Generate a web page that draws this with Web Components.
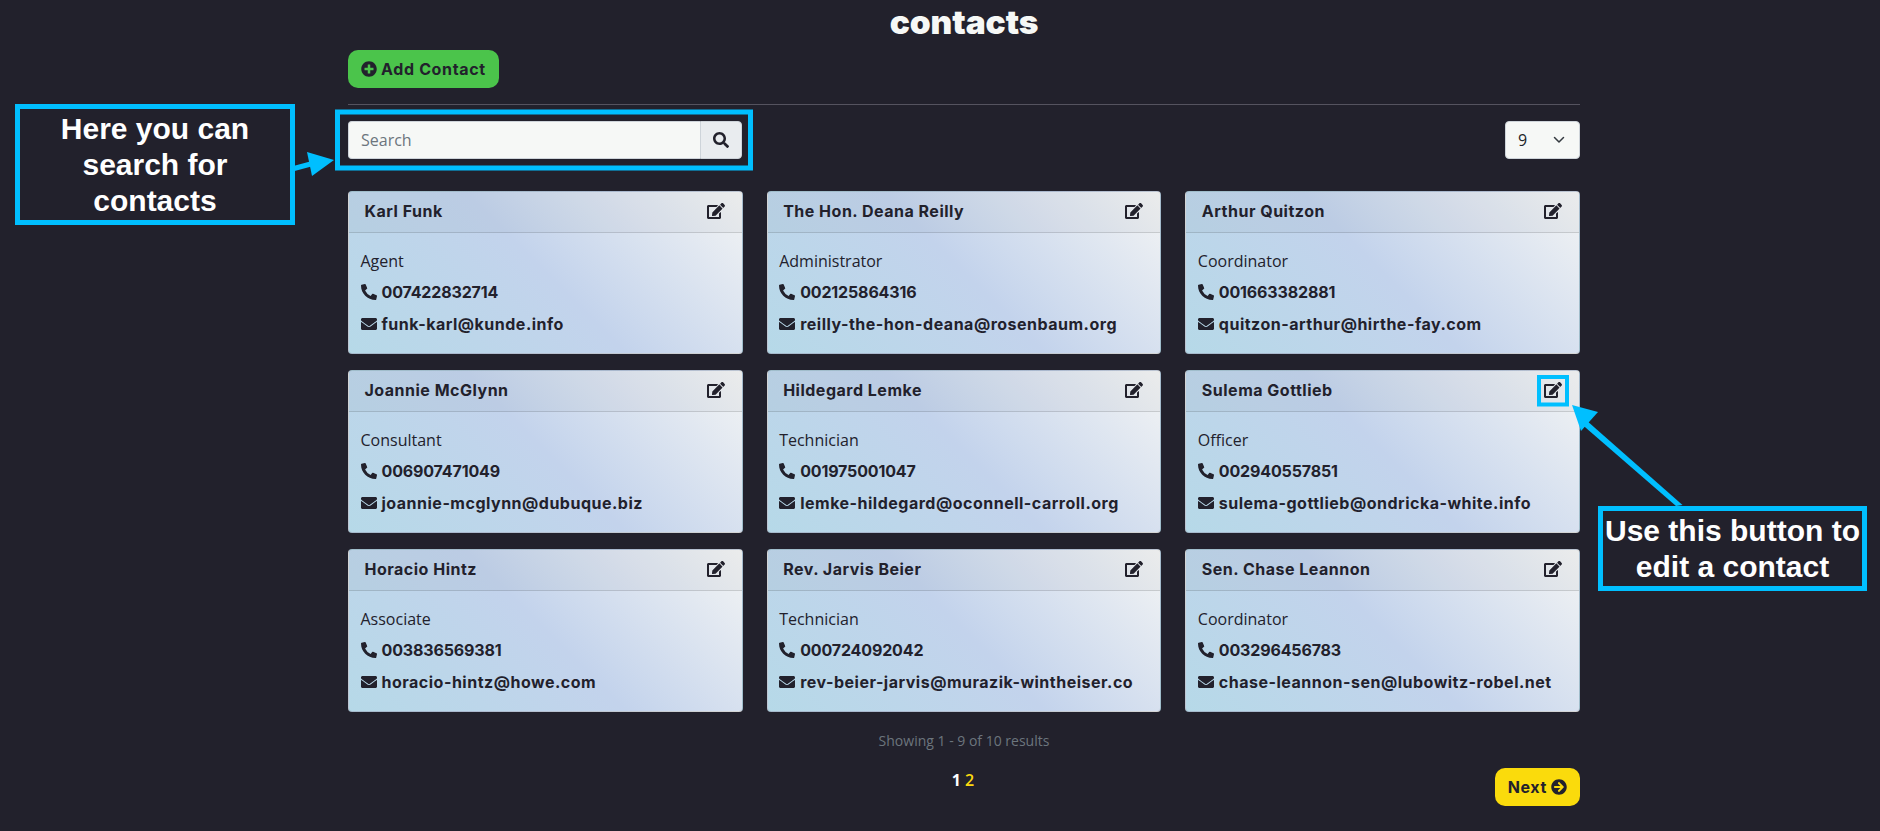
<!DOCTYPE html>
<html lang="en"><head><meta charset="utf-8"><title>contacts</title>
<style>
html,body{margin:0;height:831px;overflow:hidden;background:#22212c}
body{font-family:"Open Sans",sans-serif;color:#22212c}
</style></head><body>
<contacts-app></contacts-app>
<script>
const P={
phone:['0 0 512 512','M497.39 361.8l-112-48a24 24 0 0 0-28 6.9l-49.6 60.6A370.66 370.66 0 0 1 130.6 204.11l60.6-49.6a23.94 23.94 0 0 0 6.9-28l-48-112A24.16 24.16 0 0 0 122.6.61l-104 24A24 24 0 0 0 0 48c0 256.5 207.9 464 464 464a24 24 0 0 0 23.4-18.6l24-104a24.29 24.29 0 0 0-14.01-27.6z'],
mail:['0 0 512 512','M502.3 190.8c3.9-3.1 9.7-.2 9.7 4.7V400c0 26.5-21.5 48-48 48H48c-26.5 0-48-21.5-48-48V195.6c0-5 5.7-7.8 9.7-4.7 22.4 17.4 52.1 39.5 154.1 113.6 21.1 15.4 56.7 47.8 92.2 47.6 35.7.3 72-32.8 92.3-47.6 102-74.1 131.6-96.3 154-113.7zM256 320c23.2.4 56.6-29.2 73.4-41.4 132.7-96.3 142.8-104.7 173.4-128.7 5.8-4.5 9.2-11.5 9.2-18.9v-19c0-26.5-21.5-48-48-48H48C21.5 64 0 85.5 0 112v19c0 7.4 3.4 14.3 9.2 18.9 30.6 23.9 40.7 32.4 173.4 128.7 16.8 12.2 50.2 41.8 73.4 41.4z'],
search:['0 0 512 512','M505 442.7L405.3 343c-4.5-4.5-10.6-7-17-7H372c27.6-35.3 44-79.7 44-128C416 93.1 322.9 0 208 0S0 93.1 0 208s93.1 208 208 208c48.3 0 92.7-16.4 128-44v16.3c0 6.4 2.5 12.5 7 17l99.7 99.7c9.4 9.4 24.6 9.4 33.9 0l28.3-28.3c9.4-9.4 9.4-24.6.1-34zM208 336c-70.7 0-128-57.2-128-128 0-70.7 57.2-128 128-128 70.7 0 128 57.2 128 128 0 70.7-57.2 128-128 128z'],
plus:['0 0 512 512','M256 8C119 8 8 119 8 256s111 248 248 248 248-111 248-248S393 8 256 8zm144 276c0 6.6-5.4 12-12 12h-92v92c0 6.6-5.4 12-12 12h-56c-6.6 0-12-5.4-12-12v-92h-92c-6.6 0-12-5.4-12-12v-56c0-6.6 5.4-12 12-12h92v-92c0-6.6 5.4-12 12-12h56c6.6 0 12 5.4 12 12v92h92c6.6 0 12 5.4 12 12v56z'],
next:['0 0 512 512','M256 8c137 0 248 111 248 248S393 504 256 504 8 393 8 256 119 8 256 8zm-28.9 143.6l75.5 72.4H120c-13.3 0-24 10.7-24 24v16c0 13.3 10.7 24 24 24h182.6l-75.5 72.4c-9.7 9.3-9.9 24.8-.4 34.3l11 10.9c9.4 9.4 24.6 9.4 33.9 0L404.3 273c9.4-9.4 9.4-24.6 0-33.9L271.6 106.3c-9.4-9.4-24.6-9.4-33.9 0l-11 10.9c-9.3 9.6-9.1 25.1.4 34.4z'],
edit:['0 0 576 512','M402.6 83.2l90.2 90.2c3.8 3.8 3.8 10 0 13.8L274.4 405.6l-92.8 10.3c-12.4 1.4-22.9-9.1-21.5-21.5l10.3-92.8L388.8 83.2c3.8-3.8 10-3.8 13.8 0zm162-22.9l-48.8-48.8c-15.2-15.2-39.9-15.2-55.2 0l-35.4 35.4c-3.8 3.8-3.8 10 0 13.8l90.2 90.2c3.8 3.8 10 3.8 13.8 0l35.4-35.4c15.2-15.3 15.2-40 0-55.2zM384 346.2V448H64V128h229.8c3.2 0 6.2-1.3 8.5-3.5l40-40c7.6-7.6 2.2-20.5-8.5-20.5H48C21.5 64 0 85.5 0 112v352c0 26.5 21.5 48 48 48h352c26.5 0 48-21.5 48-48V306.2c0-10.7-12.9-16-20.5-8.5l-40 40c-2.2 2.3-3.5 5.3-3.5 8.5z']
};
const icon=(n,w,h)=>`<svg width="${w}" height="${h||w}" viewBox="${P[n][0]}" fill="currentColor" aria-hidden="true" style="display:block;flex:none"><path d="${P[n][1]}"/></svg>`;
const BOLD='"Inter","Liberation Sans",sans-serif';

class AppButton extends HTMLElement{
  connectedCallback(){
    const c=this.getAttribute('color'),i=this.getAttribute('icon'),after=this.hasAttribute('after');
    this.attachShadow({mode:'open'}).innerHTML=`<style>
    :host{display:inline-flex}
    .b{display:flex;align-items:center;gap:4px;height:38px;box-sizing:border-box;padding:0 13px;border-radius:10px;background:${c};color:#22212c;font:700 16px/1 ${BOLD};letter-spacing:.65px}
    </style><div class="b">${after?'':icon(i,16)}<slot></slot>${after?icon(i,16):''}</div>`;
  }
}
customElements.define('app-button',AppButton);

class SearchBox extends HTMLElement{
  connectedCallback(){
    this.attachShadow({mode:'open'}).innerHTML=`<style>
    :host{display:flex;width:394px;height:38px;box-sizing:border-box}
    .i{flex:1;display:flex;align-items:center;padding:0 12px;background:#f6f8f6;border-radius:4px 0 0 4px;color:#6c757d;font:400 16px "Open Sans",sans-serif;border:1px solid #ced4da;border-right:0}
    .b{width:42px;display:flex;align-items:center;justify-content:center;background:#e9ecef;border:1px solid #ced4da;border-radius:0 4px 4px 0;color:#22212c;box-sizing:border-box}
    </style><div class="i">Search</div><div class="b">${icon('search',16)}</div>`;
  }
}
customElements.define('search-box',SearchBox);

class PageSelect extends HTMLElement{
  connectedCallback(){
    this.attachShadow({mode:'open'}).innerHTML=`<style>
    :host{display:flex;width:75px;height:38px;box-sizing:border-box;align-items:center;justify-content:space-between;padding:0 14px 0 12px;background:#f6f8f6;border-radius:4px;border:1px solid #ced4da;color:#212529;font:400 16px "Open Sans",sans-serif}
    </style><span>9</span><svg width="12" height="9" viewBox="0 0 16 12" fill="none" stroke="#343a40" stroke-width="2" stroke-linecap="round" stroke-linejoin="round"><path d="M2 2l6 6 6-6"/></svg>`;
  }
}
customElements.define('page-select',PageSelect);

class ContactCard extends HTMLElement{
  connectedCallback(){
    const a=k=>this.getAttribute(k);
    this.attachShadow({mode:'open'}).innerHTML=`<style>
    :host{display:block;height:163px;box-sizing:border-box;border-radius:4px;border:1px solid rgba(0,0,0,.125);overflow:hidden;
      background:linear-gradient(45deg,#b6d9e8 0%,#c3d3ec 50%,#f3f4f4 100%);color:#22212c}
    header{display:flex;align-items:center;justify-content:space-between;height:41px;box-sizing:border-box;padding:0 17px 2px 15.5px;background:rgba(0,0,0,.03);border-bottom:1px solid rgba(0,0,0,.125)}
    .n{font:700 16px/1 ${BOLD};letter-spacing:.5px}
    .body{padding:16px 12px 0 11.5px;display:flex;flex-direction:column}
    .role{font:400 16px/24px "Open Sans",sans-serif;height:24px;margin-bottom:7px}
    .row{display:flex;align-items:center;gap:5px;font:700 16px/24px ${BOLD};letter-spacing:.5px;height:24px;margin-bottom:8px}
    .ph{letter-spacing:-.15px}
    </style>
    <header><span class="n">${a('name')}</span>${icon('edit',18,16)}</header>
    <div class="body"><div class="role">${a('role')}</div>
    <div class="row">${icon('phone',16)}<span class="ph">${a('phone')}</span></div>
    <div class="row">${icon('mail',16)}<span>${a('mail')}</span></div></div>`;
  }
}
customElements.define('contact-card',ContactCard);

class PagerBar extends HTMLElement{
  connectedCallback(){
    this.attachShadow({mode:'open'}).innerHTML=`<style>
    :host{display:block;color:#6c757d;font:400 14px/20px "Open Sans",sans-serif;text-align:center}
    .r{margin-top:15px;display:grid;grid-template-columns:1fr auto 1fr;align-items:start;}
    .p{grid-column:2;font:600 16px/22px "Open Sans",sans-serif;color:#fff;display:flex;gap:4px;padding-top:3px;margin-left:-2px}
    .p b{font-weight:700}
    .p span{color:#fbd90f;font-weight:600}
    .n{justify-self:end;margin-top:2px}
    </style><div>Showing 1 - 9 of 10 results</div>
    <div class="r"><div class="p"><b>1</b><span>2</span></div><div class="n"><slot></slot></div></div>`;
  }
}
customElements.define('pager-bar',PagerBar);

class CallOut extends HTMLElement{
  connectedCallback(){
    this.attachShadow({mode:'open'}).innerHTML=`<style>
    :host{position:absolute;box-sizing:border-box;border:5px solid #00bfff;display:flex;align-items:center;justify-content:center;text-align:center;color:#fff;font:700 30px/36px "Liberation Sans",Arial,sans-serif}
    </style><slot></slot>`;
  }
}
customElements.define('call-out',CallOut);

const DATA=[
['Karl Funk','Agent','007422832714','funk-karl@kunde.info'],
['The Hon. Deana Reilly','Administrator','002125864316','reilly-the-hon-deana@rosenbaum.org'],
['Arthur Quitzon','Coordinator','001663382881','quitzon-arthur@hirthe-fay.com'],
['Joannie McGlynn','Consultant','006907471049','joannie-mcglynn@dubuque.biz'],
['Hildegard Lemke','Technician','001975001047','lemke-hildegard@oconnell-carroll.org'],
['Sulema Gottlieb','Officer','002940557851','sulema-gottlieb@ondricka-white.info'],
['Horacio Hintz','Associate','003836569381','horacio-hintz@howe.com'],
['Rev. Jarvis Beier','Technician','000724092042','rev-beier-jarvis@murazik-wintheiser.co'],
['Sen. Chase Leannon','Coordinator','003296456783','chase-leannon-sen@lubowitz-robel.net']];

class ContactsApp extends HTMLElement{
  connectedCallback(){
    const cards=DATA.map(d=>`<contact-card name="${d[0]}" role="${d[1]}" phone="${d[2]}" mail="${d[3]}"></contact-card>`).join('');
    this.attachShadow({mode:'open'}).innerHTML=`<style>
    :host{display:block;position:relative;width:1880px;height:831px;box-sizing:border-box;padding:0 300px 0 348px}
    h1{margin:0;height:50px;box-sizing:border-box;padding-top:3px;text-align:center;color:#f6f8f6;font:900 33.5px/38px ${BOLD};letter-spacing:-.1px}
    hr{margin:16px 0;border:0;border-top:1px solid #55535f}
    .tools{display:flex;justify-content:space-between}
    .grid{margin-top:32px;display:grid;grid-template-columns:repeat(3,1fr);column-gap:24px;row-gap:16px}
    pager-bar{margin-top:19px}
    svg.a{position:absolute;left:0;top:0;pointer-events:none}
    </style>
    <h1>contacts</h1>
    <app-button color="#4bc44b" icon="plus">Add Contact</app-button>
    <hr>
    <div class="tools"><search-box></search-box><page-select></page-select></div>
    <div class="grid">${cards}</div>
    <pager-bar><app-button color="#fadb0c" icon="next" after>Next</app-button></pager-bar>
    <call-out style="left:15px;top:104px;width:280px;height:121px">Here you can<br>search for<br>contacts</call-out>
    <call-out style="left:1598px;top:506px;width:269px;height:85px">Use this button to<br>edit a contact</call-out>
    <svg class="a" width="1880" height="831" fill="#00bfff">
      <rect x="337.5" y="112" width="413" height="56" fill="none" stroke="#00bfff" stroke-width="5"/>
      <rect x="1539" y="377" width="28" height="27.5" fill="none" stroke="#00bfff" stroke-width="4"/>
      <path d="M294 168.5L320 161.5" stroke="#00bfff" stroke-width="5"/>
      <path d="M307 152L334 160L312 176z"/>
      <path d="M1682.5 505L1586 420L1582 424.5L1676 506z"/>
      <path d="M1572 405L1598 412L1581 431z"/>
    </svg>`;
  }
}
customElements.define('contacts-app',ContactsApp);
</script>
</body></html>
